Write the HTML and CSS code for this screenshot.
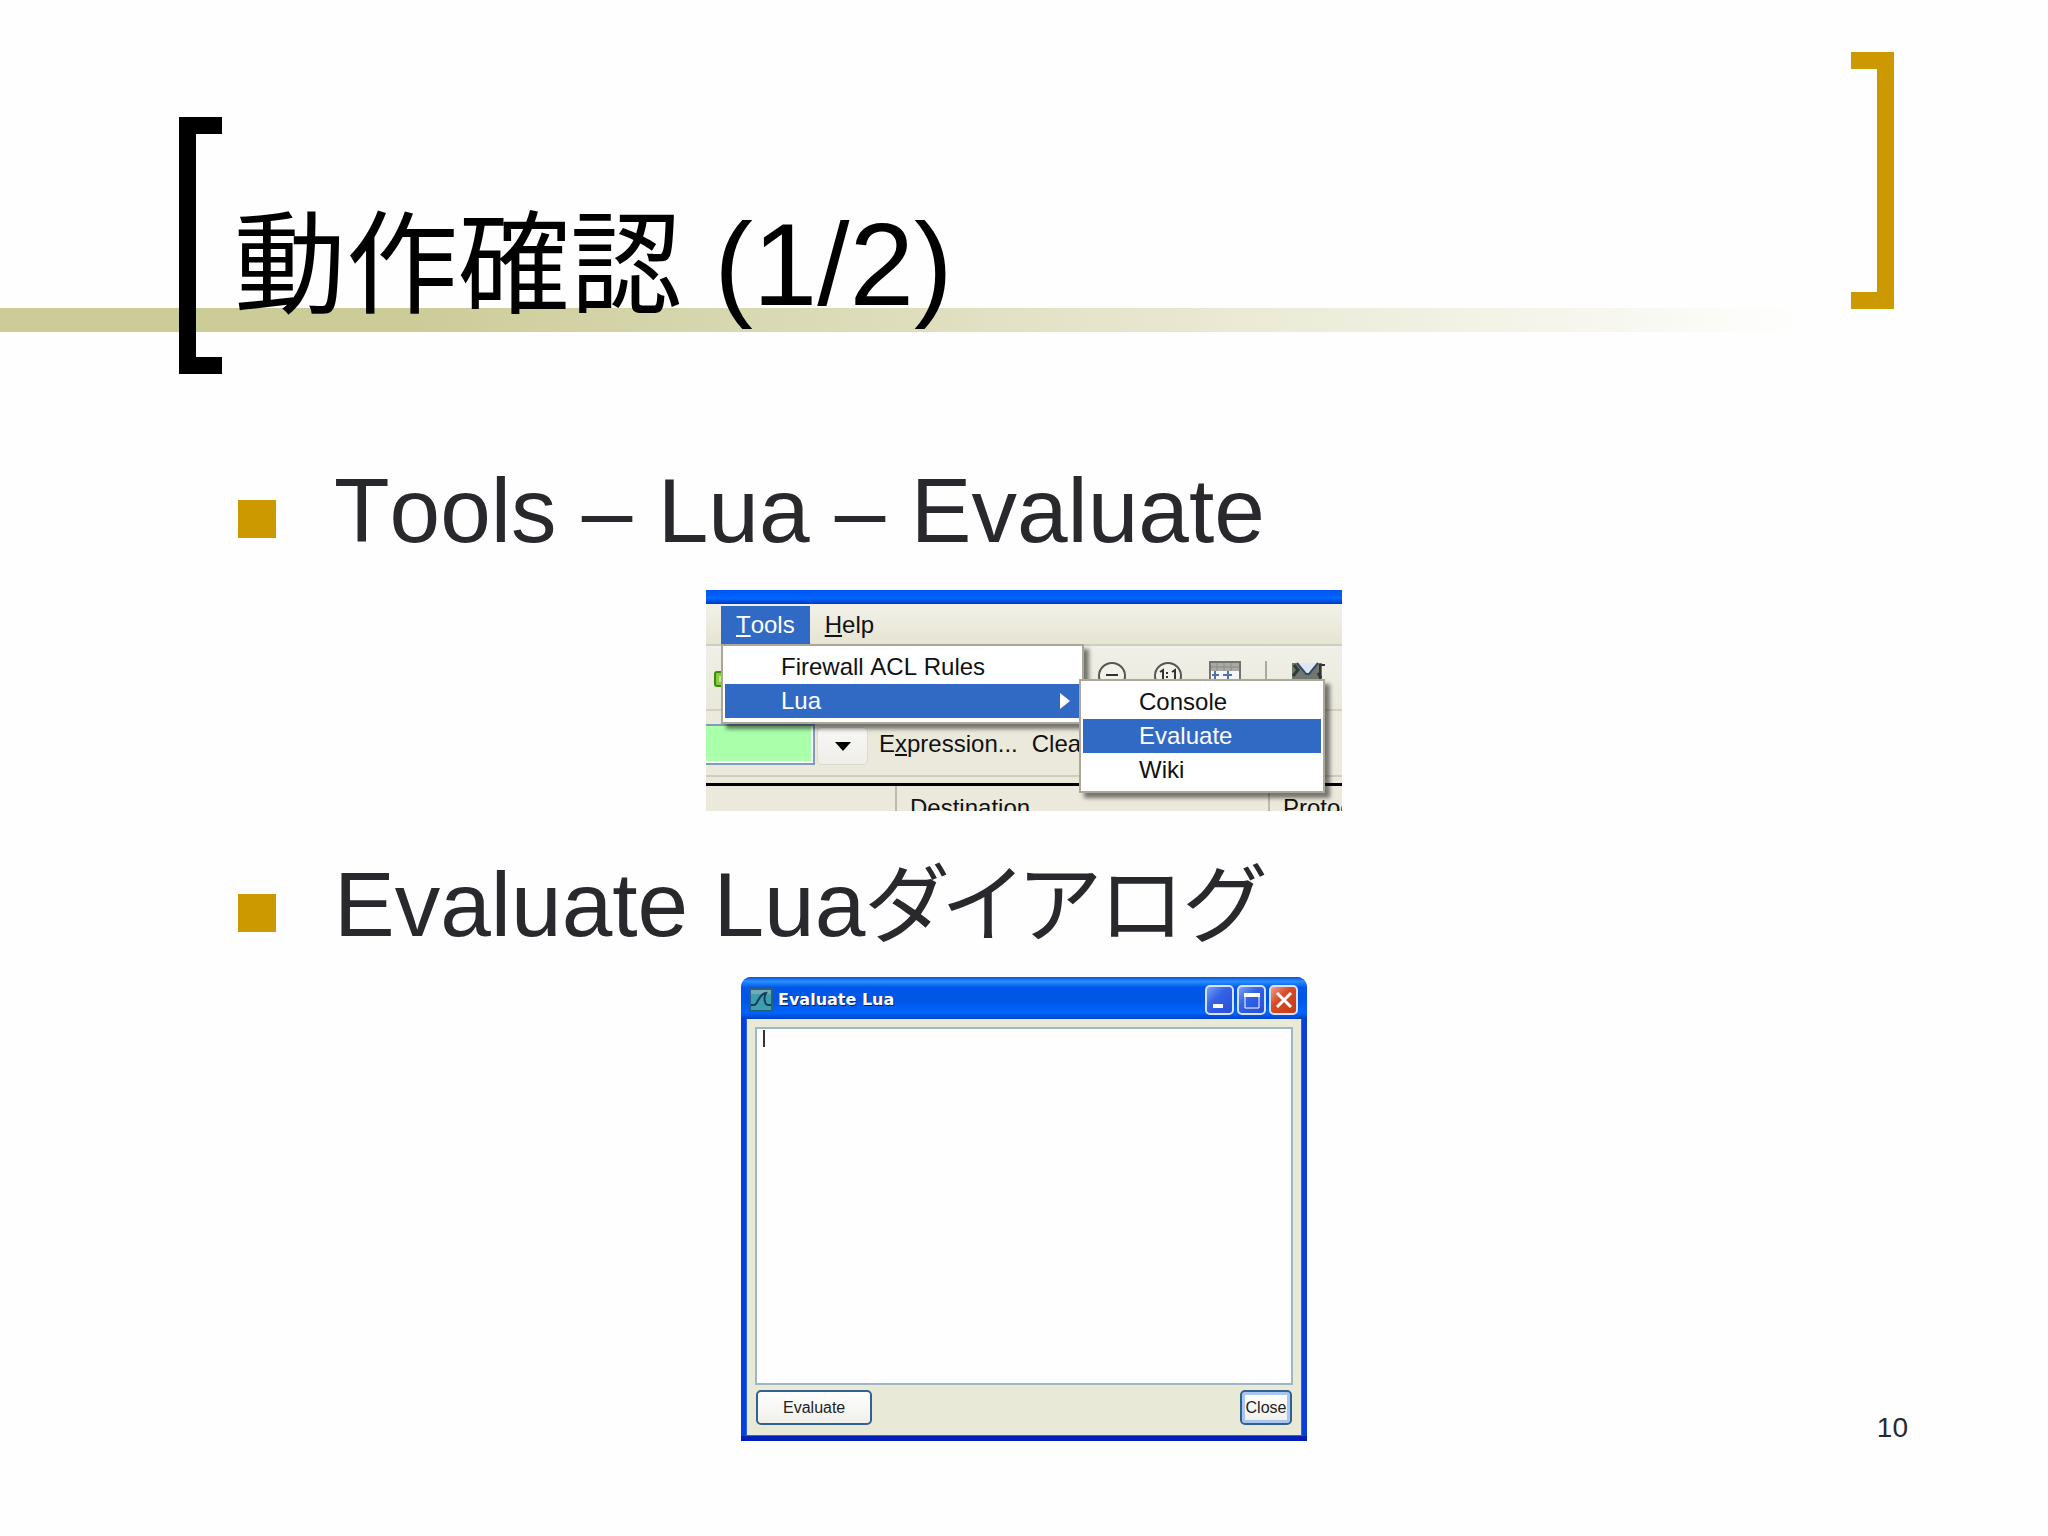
FILE: index.html
```html
<!DOCTYPE html>
<html lang="ja">
<head>
<meta charset="utf-8">
<meta name="viewport" content="width=device-width, initial-scale=1">
<title>動作確認 (1/2)</title>
<link rel="stylesheet" href="styles.css">
</head>
<body>
<article class="slide">
  <header class="slide-header">
    <div class="title-group">
      <span class="bracket bracket-left"></span>
      <h1 class="title">動作確認<span class="title-part"> (1/2)</span></h1>
    </div>
    <span class="bracket bracket-right"></span>
  </header>

  <main class="slide-main">
    <ul class="points">
      <li class="point">
        <p class="point-text">Tools – Lua – Evaluate</p>
        <div class="shot">
          <div class="shot-title"></div>
          <nav class="menubar">
            <button class="menubar-item is-open" type="button"><u>T</u>ools</button>
            <button class="menubar-item" type="button"><u>H</u>elp</button>
          </nav>
          <div class="toolbar">
            <svg class="tool-go" width="16" height="16" viewBox="0 0 16 16"><rect x="1" y="1" width="18" height="14" rx="2" fill="#8ccb3f" stroke="#3b8a12" stroke-width="2"/><rect x="5" y="5" width="12" height="6" fill="#c4ec8d"/></svg>
            <div class="tool-icons">
              <svg width="30" height="30" viewBox="0 0 30 30"><circle cx="15" cy="15" r="13" fill="#f2f1ea" stroke="#55564f" stroke-width="2"/><path d="M9 14h12" stroke="#333" stroke-width="2"/></svg>
              <svg width="30" height="30" viewBox="0 0 30 30"><circle cx="15" cy="15" r="13" fill="#f2f1ea" stroke="#55564f" stroke-width="2"/><path d="M7 11l3-2v9M19 11l3-2v9M14 11v2M14 15v2" fill="none" stroke="#333" stroke-width="2"/></svg>
              <svg width="32" height="30" viewBox="0 0 32 30"><rect x="1" y="1" width="30" height="28" fill="#f4f6fa" stroke="#73736f" stroke-width="2"/><path d="M2 2h28v8H2z" fill="#a9a9a5"/><path d="M8 2v8M15 2v8M22 2v8M2 6h28" stroke="#8b8b87"/><path d="M3 14h7M6 10v8M14 14h9M19 10v8" stroke="#4d73a8" stroke-width="2"/></svg>
              <i class="tool-sep"></i>
              <svg width="34" height="30" viewBox="0 0 34 30"><path d="M1 2h30v18H1z" fill="#6f7770"/><path d="M3 4l4 5-5 6M27 12l3 5" stroke="#2e3a33" stroke-width="3" fill="none"/><path d="M6 2h21l-9 11h-4z" fill="#dce8f7"/><path d="M6 2l9 11h3l9-11" fill="none" stroke="#3a4c63" stroke-width="2"/><path d="M29 20V4h5" fill="none" stroke="#333" stroke-width="2"/></svg>
            </div>
          </div>
          <form class="filterbar">
            <input class="filter-input" type="text" aria-label="Filter">
            <button class="filter-drop" type="button" aria-label="History"><svg width="16" height="9" viewBox="0 0 16 9"><path d="M0 0h16L8 9z"/></svg></button>
            <button class="filter-action" type="button">E<u>x</u>pression...</button>
            <button class="filter-action" type="button">Clear</button>
          </form>
          <table class="packets">
            <tr><th class="col-source"></th><th class="col-dest">Destination</th><th>Protocol</th></tr>
          </table>
          <div class="menu menu-tools">
            <button class="menu-item" type="button">Firewall ACL Rules</button>
            <button class="menu-item is-selected" type="button">Lua <svg width="10" height="16" viewBox="0 0 10 16"><path d="M0 0l10 8-10 8z" fill="#fff"/></svg></button>
          </div>
          <div class="menu menu-lua">
            <button class="menu-item" type="button">Console</button>
            <button class="menu-item is-selected" type="button">Evaluate</button>
            <button class="menu-item" type="button">Wiki</button>
          </div>
        </div>
      </li>
      <li class="point">
        <p class="point-text"><span>Evaluate Lua<span class="kana">ダイアログ</span></span></p>
        <section class="dialog">
          <div class="dialog-title">
            <svg class="app-icon" width="24" height="24" viewBox="0 0 24 24"><rect x="1" y="1" width="22" height="22" fill="#3f9db0" stroke="#285f7e" stroke-width="2"/><path d="M2 2h20v4H2z" fill="#76a9b8"/><path d="M2 17h3c4 0 4-11 12-12-3 5-1 12 2 12h3" fill="none" stroke="#123f55" stroke-width="2"/></svg>
            <h2 class="dialog-name">Evaluate Lua</h2>
            <button class="win-btn" type="button" aria-label="Minimize"><svg width="24" height="24" viewBox="0 0 24 24"><path d="M5 16h10v4H5z" fill="#fff"/></svg></button>
            <button class="win-btn" type="button" aria-label="Maximize"><svg width="24" height="24" viewBox="0 0 24 24"><path d="M5 6h14v14H5z" fill="none" stroke="#fff" stroke-width="1"/><path d="M4 5h16v4H4z" fill="#fff"/></svg></button>
            <button class="win-btn win-close" type="button" aria-label="Close window"><svg width="24" height="24" viewBox="0 0 24 24"><path d="M5 5l14 14M19 5L5 19" stroke="#fff" stroke-width="3"/></svg></button>
          </div>
          <div class="dialog-body">
            <div class="editor">
              <textarea class="editor-input" aria-label="Lua"></textarea>
              <span class="caret"></span>
            </div>
            <div class="dialog-actions">
              <button class="btn" type="button">Evaluate</button>
              <button class="btn btn-default" type="button">Close</button>
            </div>
          </div>
        </section>
      </li>
    </ul>
  </main>

  <footer class="slide-footer">10</footer>
</article>
</body>
</html>
```
FILE: styles.css
```css
* {
  box-sizing: border-box;
}

body {
  margin: 0;
  background: #fefefe;
  font-family: "Liberation Sans", "Noto Sans CJK JP", sans-serif;
  font-kerning: none;
  color: #29282c;
}

button,
input,
textarea {
  margin: 0;
  padding: 0;
  border: 0;
  font: inherit;
  color: inherit;
  background: none;
}

svg {
  display: block;
  flex: none;
}

/* The page number shares the row of the content, at its bottom right */
.slide {
  display: grid;
  grid-template-rows: auto 1fr;
  min-height: 100vh;
}

.slide-main,
.slide-footer {
  grid-area: 2 / 1;
}

/* Header: two brackets and a fading band */
.slide-header {
  display: flex;
  justify-content: space-between;
  align-items: flex-start;
  padding: 52px 154px 0 179px;
  background: linear-gradient(to right, #cccc99, #cccc99 20%, #fefefe 88%) 0 308px / 100% 24px no-repeat;
}

.title-group {
  display: flex;
  align-items: flex-end;
  gap: 12px;
  padding-top: 65px;
}

.bracket {
  flex: none;
  width: 43px;
  height: 257px;
  border: 17px solid #000;
}

.bracket-left {
  border-right: 0;
}

.bracket-right {
  border-color: #cc9900;
  border-left: 0;
}

.title {
  margin: 0 0 43px;
  font-size: 112px;
  line-height: 128px;
  font-weight: 400;
  color: #000;
}

.title-part {
  font-size: 116px;
}

/* Bullet points */
.points {
  margin: 0;
  padding: 79px 0 0;
  list-style: none;
}

.point {
  display: flex;
  flex-direction: column;
  align-items: center;
}

.point + .point {
  margin-top: 36px;
}

.point-text {
  display: flex;
  align-items: center;
  align-self: stretch;
  gap: 58px;
  margin: 0;
  padding: 0 154px 14px 238px;
  font-size: 91px;
  line-height: 116px;
}

.point-text::before {
  content: "";
  width: 38px;
  height: 38px;
  margin-top: 16px;
  background: #cc9900;
}

.kana {
  font-size: 86px;
  line-height: 1;
  font-feature-settings: "palt";
}

/* Application window with open menus */
.shot {
  position: relative;
  width: 636px;
  height: 221px;
  margin-top: 7px;
  overflow: hidden;
  background: #ebe9dc;
  font-size: 24px;
  line-height: 34px;
  color: #111;
}

.shot-title {
  height: 14px;
  background: linear-gradient(#0055f0, #0066ff 60%, #0038c0);
}

.menubar {
  display: flex;
  height: 42px;
  padding: 2px 0 0 15px;
  background: linear-gradient(#f2f1e8, #e6e5d2);
  border-bottom: 2px solid #cfcdbe;
}

.menubar-item {
  padding: 0 15px;
}

.menubar-item.is-open,
.menu-item.is-selected {
  background: #316ac5;
  color: #fff;
}

.toolbar {
  display: flex;
  justify-content: space-between;
  height: 65px;
  padding: 15px 17px 0 8px;
  background: linear-gradient(#f1f0e8, #e9e8da);
  border-bottom: 2px solid #d3d1c2;
}

.tool-go {
  margin-top: 10px;
}

.tool-icons {
  display: flex;
  gap: 26px;
}

.tool-sep {
  width: 2px;
  margin: 0 -2px;
  background: #aaa99c;
}

.filterbar {
  display: flex;
  align-items: flex-end;
  height: 66px;
  padding-bottom: 10px;
  border-bottom: 2px solid #cfcdbe;
}

.filter-input {
  width: 109px;
  height: 41px;
  background: #aaffaa;
  border: 2px solid #7f9db9;
  border-left: 0;
  box-shadow: inset -2px -2px #fff;
}

.filter-drop {
  display: grid;
  place-items: center;
  width: 51px;
  height: 38px;
  margin: 0 11px 0 2px;
  background: linear-gradient(#f7f7f5, #efeee8);
  border: 1px solid #dddbd0;
  border-radius: 5px;
}

.filter-action {
  margin-right: 14px;
  padding-bottom: 4px;
}

.packets {
  width: 100%;
  margin-top: 6px;
  border-collapse: collapse;
  border-top: 3px solid #000;
  table-layout: fixed;
}

.packets th {
  padding: 5px 0 0 13px;
  font-weight: 400;
  text-align: left;
}

.col-source {
  width: 190px;
  border-right: 2px solid #bdbbac;
}

.packets .col-dest {
  width: 373px;
  border-right: 2px solid #bdbbac;
}

.menu {
  position: absolute;
  display: flex;
  flex-direction: column;
  padding: 4px 2px;
  background: #fff;
  border: 2px solid #aca899;
  box-shadow: 5px 5px 4px rgba(0, 0, 0, 0.5);
}

.menu-item {
  display: flex;
  justify-content: space-between;
  align-items: center;
  height: 34px;
  padding: 0 10px 0 56px;
}

.menu-tools {
  left: 15px;
  top: 54px;
  width: 363px;
}

.menu-lua {
  left: 373px;
  top: 89px;
  width: 246px;
}

/* Evaluate Lua dialog */
.dialog {
  width: 566px;
  background: #0a3fdc;
  border-bottom: 5px solid #0020b8;
  border-radius: 10px 10px 0 0;
  overflow: hidden;
}

.dialog-title {
  display: flex;
  align-items: center;
  gap: 3px;
  height: 42px;
  padding: 4px 9px 0 8px;
  background: linear-gradient(#0a50d8, #2a90ff 10%, #0058e8 25%, #0055e5 55%, #0066ff 85%, #0040c8);
}

.dialog-name {
  flex: 1;
  margin: 0;
  padding-left: 2px;
  font-family: "DejaVu Sans", sans-serif;
  font-size: 16px;
  line-height: 24px;
  font-weight: 700;
  color: #fff;
  text-shadow: 1px 1px #0a246a;
}

.win-btn {
  display: grid;
  place-items: center;
  width: 29px;
  height: 30px;
  background: linear-gradient(135deg, #7da0f5, #3463e4 40%, #2450d8);
  border: 2px solid #d6e2ff;
  border-radius: 5px;
}

.win-close {
  background: linear-gradient(135deg, #f0a088, #da4a26 40%, #c23c14);
}

.dialog-body {
  margin: 0 5px;
  padding: 8px 9px 10px;
  background: #e9e9d8;
  border: 1px solid #2468f0;
  border-top: 0;
}

.editor {
  position: relative;
  margin: 0 -1px;
}

.editor-input {
  display: block;
  width: 100%;
  height: 358px;
  background: #fefefe;
  border: 2px solid #9fb6c4;
  resize: none;
}

.caret {
  position: absolute;
  left: 8px;
  top: 3px;
  width: 2px;
  height: 17px;
  background: #333;
}

.dialog-actions {
  display: flex;
  justify-content: space-between;
  padding-top: 5px;
  font-size: 16px;
  color: #222;
}

.btn {
  min-width: 52px;
  height: 35px;
  padding: 0 25px;
  background: linear-gradient(#fefefe, #f0f0ea);
  border: 2px solid #33618f;
  border-radius: 5px;
}

.btn-default {
  padding: 0 3px;
  box-shadow: inset 0 0 0 3px #a9c6f2;
}

.slide-footer {
  align-self: end;
  justify-self: end;
  padding: 0 140px 92px 0;
  font-size: 28px;
  line-height: 32px;
}
```
